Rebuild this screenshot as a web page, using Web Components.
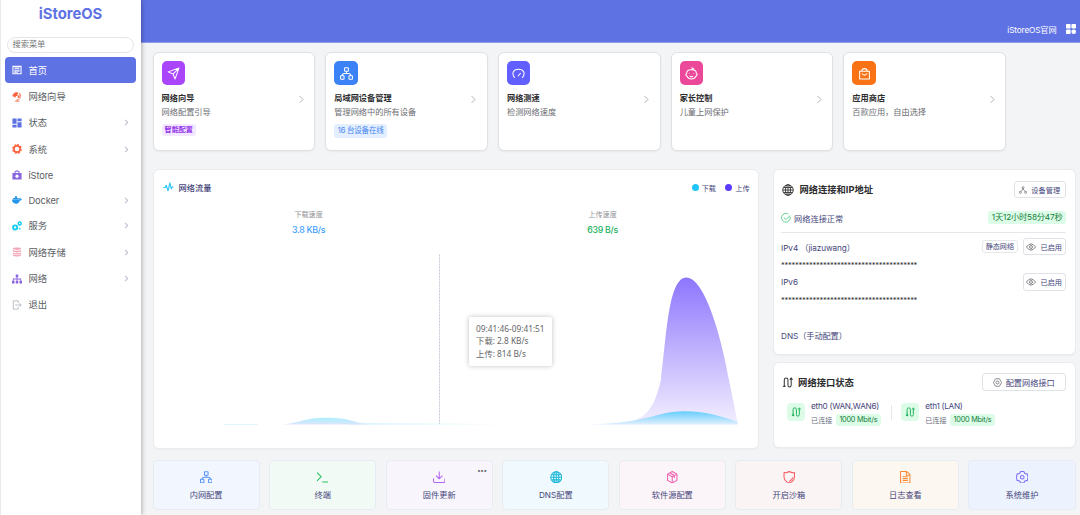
<!DOCTYPE html>
<html lang="zh-CN">
<head>
<meta charset="utf-8">
<title>iStoreOS</title>
<style>
  html, body {
    margin: 0;
    height: 100%;
    overflow: hidden;
  }

  body {
    --accent: #5e72e4;
    --ink: #45457a;
    --line: #e5e7eb;
    --page: #f3f4f6;
    font-family: Inter, "Noto Sans CJK SC", sans-serif;
    font-size: 8.2px;
    color: var(--ink);
    background: var(--page);
  }
</style>
</head>
<body>
<router-app></router-app>

<script>
// Icons on a 24x24 grid, stroked with currentColor unless they set a fill.
const ICONS = {
  home: '<path fill="currentColor" stroke="none" fill-rule="evenodd" d="M1 2h22v20H1zM3.500 4.500v15h17v-15zM6 6h12v3H6zM6 11h3v8H6zM10.500 11h3v8h-3zM15 11h3v5h-3z"/>',
  guide: '<g fill="currentColor" stroke="none"><path d="M3 5c3-5 10-5 13-3l-3 4 1 3-5 1-1 4-4-3-3-1c0-2 1-4 2-5zM17 6c2 3 2 6 0 9l-4-2 1-3z"/><path d="M18 2c7 6 4 16-4 17v2h4v2H7v-2h4v-3c9 1 13-8 6-14z"/></g>',
  status: '<path fill="currentColor" stroke="none" d="M1 1h10v13H1zM1 16h10v7H1zM13 1h10v7H13zM13 10h10v13H13z"/>',
  gear: '<circle cx="12" cy="12" r="7.500" stroke-width="4"/><path stroke-width="3" stroke-dasharray="4.500 3.600" d="M12 1.700a10.300 10.300 0 1 1 0 20.600a10.300 10.300 0 1 1 0-20.600"/>',
  store: '<path fill="currentColor" stroke="none" fill-rule="evenodd" d="M1 7h5V5q0-4 4-4h4q4 0 4 4v2h5v16H1zM8.500 7h7V4h-7zM12 10l-5 5 5 5 5-5z"/>',
  docker: '<path fill="currentColor" stroke="none" d="M0 11h18c-1-2 0-4 1-5 2 1 2 2 2 4 1-1 2 0 3 0-1 2-3 3-5 3-2 6-5 8-10 8-5 0-9-4-9-10zM3 7h13v3H3zM7 3h5v4H7z"/>',
  gears: '<circle cx="7.500" cy="15.500" r="5" stroke-width="4.500"/><circle cx="18.500" cy="6" r="3.500" stroke-width="3.500"/><circle cx="18.500" cy="18.500" r="1.500"/>',
  disk: '<g fill="currentColor" stroke="none"><path d="M2 4q0-3 10-3t10 3v1q-10 4-20 0z"/><path d="M2 7q10 4 20 0v4q-10 4-20 0z"/><path d="M2 13q10 4 20 0v3q-10 4-20 0z"/><path d="M2 18q10 4 20 0v2q-2 3-10 3t-10-3z"/></g>',
  sitemap: '<path fill="currentColor" stroke="none" d="M9 1h6v7h-2v3h9v5h2v7h-6v-7h2v-3h-7v3h2v7H9v-7h2v-3H4v3h2v7H0v-7h2v-5h9V8H9z"/>',
  exit: '<path d="M15 7V2H3v20h12v-5M8 12h14M18 8l4 4-4 4"/>',
  right: '<path d="M7 3l9 9-9 9"/>',
  grid: '<g fill="currentColor" stroke="none"><rect x="0" y="0" width="11" height="11" rx="2"/><rect x="13" y="0" width="11" height="11" rx="2"/><rect x="0" y="13" width="11" height="11" rx="2"/><rect x="13" y="13" width="11" height="11" rx="5"/></g>',
  plane: '<path d="M22 2L2 9l9 4 4 9zM11 13L22 2"/>',
  nodes: '<rect x="8.500" y="1.500" width="7" height="6.500" rx="1"/><rect x="1" y="16" width="6.500" height="6.500" rx="1"/><rect x="16.500" y="16" width="6.500" height="6.500" rx="1"/><path d="M12 8v4M4 16q0-4 4-4h8q4 0 4 4"/>',
  gauge: '<path d="M5 20C-2 11 3 4 12 4s14 7 7 16M11 17l5-6"/>',
  baby: '<path d="M13 5c6 0 8 3 8 7 2 1 2 3 0 4-2 4-5 6-9 6s-7-2-9-6c-2-1-2-3 0-4 0-4 3-7 8-7 3 0 4-3 1-4M13 5q4 0 3-3M9 17q3 2 6 0M8 12v1M16 12v1"/>',
  bag: '<path d="M3 8h18v14H3zM7 8q0-5 5-5t5 5M7 12q5 6 10 0"/>',
  pulse: '<path d="M1 12h4l2-5 4 12 4-17 3 13 2-4h3"/>',
  globe: '<circle cx="12" cy="12" r="10.500"/><ellipse cx="12" cy="12" rx="5" ry="10.500"/><path d="M12 1.500v21M1.500 12h21M3.500 7h17M3.500 17h17"/>',
  user: '<circle cx="12" cy="5" r="3"/><path d="M12 8l-6 9M12 8l6 9"/><circle cx="4" cy="19" r="3"/><circle cx="20" cy="19" r="3"/>',
  check: '<path d="M22 9a10.500 10.500 0 1 1-4-6M7 11l5 5L22 6"/>',
  eye: '<path d="M1 12q11-15 22 0q-11 15-22 0z"/><circle cx="12" cy="12" r="3.500"/>',
  port: '<path d="M5 21V6q0-4 4-4t4 4v12q0 4 3.500 4T20 18V4M2 20h6M5 16v6M17 6l3-4 3 4"/>',
  hex: '<path d="M7 2h10l6 10-6 10H7L1 12z"/><circle cx="12" cy="12" r="4"/>',
  terminal: '<path d="M2 3l8 8-8 8M12 21h11"/>',
  download: '<path d="M12 1v14M6 9l6 6 6-6M1 14v5q0 3 3 3h16q3 0 3-3v-5"/>',
  box: '<path d="M12 1l9 5v12l-9 5-9-5V6zM3 6l9 5 9-5M12 11v12M7 3.500l9 5v5"/>',
  shield: '<path d="M12 1q5 3 10 2v9q-1 8-10 11Q3 20 2 12V3q5 1 10-2zM19 12q-1 5-7 8"/>',
  file: '<path d="M3 1h12l6 6v16H3zM14 1v7h7M7 11h10M7 14.500h10M7 18h10"/>',
  cog: '<path d="M9 1h6l2 4 5 1 1 6-1 6-5 1-2 4H9l-2-4-5-1-1-6 1-6 5-1z"/><circle cx="12" cy="12" r="3.500"/>',
};

class UiIcon extends HTMLElement {
  connectedCallback() {
    const size = this.getAttribute('size') || 12;
    const weight = this.getAttribute('weight') || 2;
    this.attachShadow({ mode: 'open' }).innerHTML = `
      <style>
        :host { display: block; flex: none; width: ${size}px; height: ${size}px; }
        svg { display: block; width: 100%; height: 100%; }
      </style>
      <svg viewBox="0 0 24 24" fill="none" stroke="currentColor" stroke-width="${weight}"
        stroke-linejoin="round">${ICONS[this.getAttribute('name')]}</svg>`;
  }
}

class NavItem extends HTMLElement {
  connectedCallback() {
    const more = this.hasAttribute('more')
      ? '<ui-icon class="more" name="right" size="7" weight="4.500"></ui-icon>' : '';
    this.attachShadow({ mode: 'open' }).innerHTML = `
      <style>
        :host {
          display: flex;
          align-items: center;
          box-sizing: border-box;
          height: 26.4px;
          padding: 0 6px 0 7px;
          border-radius: 4px;
          font-size: 9.3px;
          line-height: 14px;
          color: #5b5e63;
        }
        :host([latin]) { height: 25px; letter-spacing: -.15px; }
        :host([active]) { background: var(--accent); color: #fff; }
        :host([active]) .icon { color: #fff; }
        .icon { color: ${this.getAttribute('color')}; margin-right: 6.500px; }
        .label { flex: 1; padding-top: 1px; }
        .more { color: #c3c8d2; }
      </style>
      <ui-icon class="icon" name="${this.getAttribute('icon')}" size="10"></ui-icon>
      <span class="label"><slot></slot></span>${more}`;
  }
}

class SideNav extends HTMLElement {
  connectedCallback() {
    this.attachShadow({ mode: 'open' }).innerHTML = `
      <style>
        :host {
          display: block;
          box-sizing: border-box;
          width: 140.500px;
          padding: 0 4.500px 0 4px;
          border-left: 1px solid #e9eaec;
          background: #fff;
          box-shadow: 0 0 5px rgba(0, 0, 0, .4);
          z-index: 1;
        }
        .logo {
          height: 37px;
          font-size: 14.8px;
          font-weight: 700;
          line-height: 28px;
          text-align: center;
          color: var(--accent);
        }
        .search {
          box-sizing: border-box;
          height: 15.500px;
          margin: 0 2px 4.500px;
          padding-left: 4.500px;
          border: 1px solid #e3e5e9;
          border-radius: 8px;
          line-height: 13px;
          color: #75777b;
        }
      </style>
      <div class="logo">iStoreOS</div>
      <div class="search">搜索菜单</div>
      <nav>
        <nav-item icon="home" active>首页</nav-item>
        <nav-item icon="guide" color="#fb6340">网络向导</nav-item>
        <nav-item icon="status" color="#5e72e4" more>状态</nav-item>
        <nav-item icon="gear" color="#fb6340" more>系统</nav-item>
        <nav-item icon="store" color="#8965e0" latin>iStore</nav-item>
        <nav-item icon="docker" color="#2496ed" latin more>Docker</nav-item>
        <nav-item icon="gears" color="#11cdef" more>服务</nav-item>
        <nav-item icon="disk" color="#f3a4b5" more>网络存储</nav-item>
        <nav-item icon="sitemap" color="#8965e0" more>网络</nav-item>
        <nav-item icon="exit" color="#adb5bd">退出</nav-item>
      </nav>`;
  }
}

class TopBar extends HTMLElement {
  connectedCallback() {
    this.attachShadow({ mode: 'open' }).innerHTML = `
      <style>
        :host {
          display: flex;
          justify-content: flex-end;
          align-items: flex-start;
          gap: 9px;
          box-sizing: border-box;
          height: 43px;
          padding: 23.500px 4.500px 0 0;
          border-bottom: 1px solid #8e9cec;
          background: var(--accent);
          color: #fff;
        }
        span { line-height: 13px; letter-spacing: -.12px; }
      </style>
      <span>iStoreOS官网</span><ui-icon name="grid" size="10"></ui-icon>`;
  }
}

class FeatureCard extends HTMLElement {
  connectedCallback() {
    this.attachShadow({ mode: 'open' }).innerHTML = `
      <style>
        :host {
          display: flex;
          flex-direction: column;
          align-items: flex-start;
          box-sizing: border-box;
          height: 98.500px;
          padding: 8px;
          border: 1px solid #dfe1e5;
          border-radius: 6px;
          background: #fff;
          box-shadow: 0 1px 2px rgba(0, 0, 0, .05);
        }
        .badge {
          display: grid;
          place-items: center;
          width: 23.500px;
          height: 23.500px;
          border-radius: 5px;
          background: ${this.getAttribute('color')};
          color: #fff;
        }
        .body {
          display: flex;
          align-items: center;
          justify-content: space-between;
          align-self: stretch;
          margin-top: 6px;
        }
        .title { font-weight: 700; line-height: 14px; color: #2c2c2e; }
        .desc { line-height: 14px; color: #6b6d72; }
        .body ui-icon { margin: -10px .500px 0 0; color: #a9acb3; }
      </style>
      <div class="badge"><ui-icon name="${this.getAttribute('icon')}" size="13" weight="1.900"></ui-icon></div>
      <div class="body">
        <div>
          <div class="title">${this.getAttribute('heading')}</div>
          <div class="desc">${this.getAttribute('desc')}</div>
        </div>
        <ui-icon name="right" size="9" weight="2.500"></ui-icon>
      </div>
      <slot></slot>`;
  }
}

class UiTag extends HTMLElement {
  connectedCallback() {
    this.attachShadow({ mode: 'open' }).innerHTML = `
      <style>
        :host {
          display: block;
          flex: none;
          box-sizing: border-box;
          padding: 0 3.500px;
          border-radius: 3px;
          font-size: 7.300px;
          letter-spacing: -.24px;
          line-height: 12px;
          white-space: nowrap;
          background: #dcfce7;
          color: #15803d;
        }
        :host([tone="purple"]) {
          margin-top: 5px;
          padding: 0 3px;
          font-size: 7.100px;
          font-weight: 700;
          letter-spacing: 0;
          background: #f3e8ff;
          color: #9333ea;
        }
        :host([tone="blue"]) {
          margin-top: 5px;
          font-size: 7.500px;
          line-height: 14px;
          letter-spacing: -.2px;
          background: #e3eeff;
          color: #4484f2;
        }
        :host([tone="plain"]) {
          padding: 0 2.500px;
          border: 1px solid var(--line);
          font-size: 7.100px;
          line-height: 11px;
          letter-spacing: 0;
          background: #fff;
          color: var(--ink);
        }
        :host([large]) { font-size: 8.2px; line-height: 13px; letter-spacing: -.15px; }
      </style>
      <slot></slot>`;
  }
}

class UiButton extends HTMLElement {
  connectedCallback() {
    this.attachShadow({ mode: 'open' }).innerHTML = `
      <style>
        :host {
          display: flex;
          flex: none;
          align-items: center;
          justify-content: center;
          gap: 4px;
          box-sizing: border-box;
          width: ${this.getAttribute('width')}px;
          height: 17.500px;
          border: 1px solid #e0e2e7;
          border-radius: 3px;
          font-size: 7.200px;
          background: #fff;
          white-space: nowrap;
        }
        ui-icon { color: #55565c; }
      </style>
      <ui-icon name="${this.getAttribute('icon')}" size="${this.getAttribute('icon-size') || 9}" weight="1.800"></ui-icon>
      <slot></slot>`;
  }
}

class UiPanel extends HTMLElement {
  connectedCallback() {
    this.attachShadow({ mode: 'open' }).innerHTML = `
      <style>
        :host {
          display: block;
          box-sizing: border-box;
          border: 1px solid #e9ebee;
          border-radius: 6px;
          background: #fff;
          box-shadow: 0 1px 1px rgba(0, 0, 0, .03);
        }
      </style>
      <slot></slot>`;
  }
}

class TrafficChart extends HTMLElement {
  connectedCallback() {
    this.attachShadow({ mode: 'open' }).innerHTML = `
      <style>
        :host { display: flex; flex-direction: column; position: relative; height: 278px; }
        header {
          display: flex;
          align-items: center;
          height: 36px;
          padding: 0 8px 0 9.500px;
        }
        h2 { flex: 1; margin: -1.500px 0 0 4.500px; font-size: 8.2px; font-weight: 500; }
        .key { display: flex; align-items: center; gap: 3px; margin-left: 9.500px; font-size: 7.100px; }
        .key::before { content: ""; width: 7px; height: 7px; border-radius: 50%; background: var(--dot); }
        .rates {
          display: grid;
          grid-template-columns: 1fr 1fr;
          padding: 1px 8px 0;
          text-align: center;
          line-height: 15px;
        }
        small { display: block; font-size: 7.100px; color: #929398; }
        b { display: block; font-size: 8.800px; font-weight: 500; letter-spacing: -.3px; color: #409eff; }
        .up b { color: #22b35e; }
        svg { display: block; width: 605px; height: 185px; margin: 13.500px 0 0 -.500px; }
        .tip {
          position: absolute;
          left: 315.500px;
          top: 147.300px;
          padding: 6px 7px;
          border-radius: 2px;
          background: #fff;
          box-shadow: 0 0 5px rgba(0, 0, 0, .25);
          font: 8.3px/12.3px "Noto Sans", "Noto Sans CJK SC", sans-serif;
          color: #666;
          white-space: nowrap;
        }
      </style>
      <header>
        <ui-icon name="pulse" size="11" weight="2.400" style="color:#28c3f7"></ui-icon>
        <h2>网络流量</h2>
        <span class="key" style="--dot:#22c5f7">下载</span>
        <span class="key" style="--dot:#5b3bfb">上传</span>
      </header>
      <div class="rates">
        <div><small>下载速度</small><b>3.8 KB/s</b></div>
        <div class="up"><small>上传速度</small><b>639 B/s</b></div>
      </div>
      <svg viewBox="153 250 605 185">
        <defs>
          <linearGradient id="up" x2="0" y2="1">
            <stop offset="0" stop-color="#8e76fd"/>
            <stop offset="1" stop-color="#f3effe"/>
          </linearGradient>
          <linearGradient id="down" x2="0" y2="1">
            <stop offset="0" stop-color="#66cdfd"/>
            <stop offset="1" stop-color="#e0effd"/>
          </linearGradient>
          <linearGradient id="early" x2="0" y2="1">
            <stop offset="0" stop-color="#aaf0fc"/>
            <stop offset="1" stop-color="#dce5fc"/>
          </linearGradient>
          <linearGradient id="tail">
            <stop offset="0" stop-color="#d5f3fd"/>
            <stop offset="1" stop-color="#fff"/>
          </linearGradient>
        </defs>
        <path fill="none" stroke="#e2f4fd" d="M224 424.500H258"/>
        <path fill="url(#tail)" d="M350 423q60 0 170 1v.800H350z"/>
        <path fill="url(#early)" d="M282 424.500C300 423 304 417.700 327 417.700S352 422 368 424.500z"/>
        <path fill="url(#up)" d="M600 424.500C642 424 652 417 661 380C667 330 669 277.500 686.500 277.500C704 277.500 721 334 729 380L737.500 422v2.500z"/>
        <path fill="url(#down)" d="M588 424.500C650 423 656 411.300 685 411.300C703 411.300 722 416 737.500 422v2.500z"/>
        <path fill="none" stroke="#c2c3d0" stroke-width=".9" stroke-dasharray="2 1" d="M439.500 254.500V424"/>
      </svg>
      <div class="tip">09:41:46-09:41:51<br>下载: 2.8 KB/s<br>上传: 814 B/s</div>`;
  }
}

class AddressPanel extends HTMLElement {
  connectedCallback() {
    const mask = '*'.repeat(39);
    this.attachShadow({ mode: 'open' }).innerHTML = `
      <style>
        :host { display: block; box-sizing: border-box; height: 184.800px; padding: 11px 8.500px 0 7.500px; }
        .row { display: flex; align-items: center; height: 18px; }
        .row span { flex: 1; letter-spacing: -.08px; }
        h2 { flex: 1; margin: -1.500px 0 0 5.500px; font-size: 9.25px; font-weight: 700; color: #2c2c2e; }
        .state { margin-top: 10px; padding-bottom: 5px; border-bottom: 1px solid var(--line); }
        .row.state span { padding-left: 3px; letter-spacing: 0; }
        .mask { height: 17.500px; font-size: 7.500px; line-height: 20px; color: #333; letter-spacing: -.27px; }
        .first { margin-top: 5px; }
        ui-tag { margin-right: 5px; }
        .state ui-tag { margin-right: 0; }
      </style>
      <div class="row">
        <ui-icon name="globe" size="12" weight="1.800" style="color:#333;margin-left:1px"></ui-icon>
        <h2>网络连接和IP地址</h2>
        <ui-button icon="user" icon-size="8" width="52.500">设备管理</ui-button>
      </div>
      <div class="row state">
        <ui-icon name="check" size="10" weight="1.800" style="color:#2fc46b"></ui-icon>
        <span>网络连接正常</span>
        <ui-tag large>1天12小时58分47秒</ui-tag>
      </div>
      <div class="row first">
        <span>IPv4 （jiazuwang）</span>
        <ui-tag tone="plain">静态网络</ui-tag>
        <ui-button icon="eye" icon-size="10" width="43.500">已启用</ui-button>
      </div>
      <div class="mask">${mask}</div>
      <div class="row">
        <span>IPv6</span>
        <ui-button icon="eye" icon-size="10" width="43.500">已启用</ui-button>
      </div>
      <div class="mask">${mask}</div>
      <div class="row" style="margin-top:17px"><span>DNS（手动配置）</span></div>`;
  }
}

class PortItem extends HTMLElement {
  connectedCallback() {
    this.attachShadow({ mode: 'open' }).innerHTML = `
      <style>
        :host { display: flex; align-items: center; gap: 6px; }
        .chip {
          display: grid;
          place-items: center;
          width: 18px;
          height: 18px;
          border-radius: 4px;
          background: #dcfce7;
          color: #22b35e;
        }
        .name { line-height: 15px; letter-spacing: -.28px; white-space: nowrap; }
        .link { display: flex; align-items: center; gap: 3.500px; font-size: 7.100px; color: #6b7080; }
      </style>
      <div class="chip"><ui-icon name="port" size="10" weight="2.400"></ui-icon></div>
      <div>
        <div class="name"><slot></slot></div>
        <div class="link">已连接<ui-tag>1000 Mbit/s</ui-tag></div>
      </div>`;
  }
}

class PortPanel extends HTMLElement {
  connectedCallback() {
    this.attachShadow({ mode: 'open' }).innerHTML = `
      <style>
        :host { display: block; box-sizing: border-box; height: 84px; padding: 10.500px 8.500px 0; }
        header { display: flex; align-items: center; }
        h2 { flex: 1; margin: 0 0 0 5px; font-size: 9.3px; font-weight: 700; color: #2c2c2e; }
        .ports { display: flex; align-items: center; margin: 8px 0 0 5px; }
        i { width: 1px; height: 15px; margin: 0 9px 0 10.500px; background: var(--line); }
      </style>
      <header>
        <ui-icon name="port" size="11" weight="2.200" style="color:#333"></ui-icon>
        <h2>网络接口状态</h2>
        <ui-button icon="hex" width="84.500" style="font-size:8.2px">配置网络接口</ui-button>
      </header>
      <div class="ports">
        <port-item>eth0 (WAN,WAN6)</port-item><i></i><port-item>eth1 (LAN)</port-item>
      </div>`;
  }
}

class QuickTile extends HTMLElement {
  connectedCallback() {
    const dots = this.hasAttribute('menu') ? '<div class="dots">•••</div>' : '';
    this.attachShadow({ mode: 'open' }).innerHTML = `
      <style>
        :host {
          display: flex;
          flex-direction: column;
          align-items: center;
          position: relative;
          box-sizing: border-box;
          height: 50.500px;
          padding-top: 10px;
          border: 1px solid #e8ebf2;
          border-radius: 4px;
          background: ${this.getAttribute('tint')};
        }
        ui-icon { color: ${this.getAttribute('color')}; }
        span { margin-top: 4.500px; line-height: 14px; }
        .dots { position: absolute; right: 5px; top: 4px; font-size: 6.200px; line-height: 11px; letter-spacing: -.3px; color: #666; }
      </style>
      <ui-icon name="${this.getAttribute('icon')}" size="12.500"></ui-icon>
      <span><slot></slot></span>${dots}`;
  }
}

class RouterApp extends HTMLElement {
  connectedCallback() {
    this.attachShadow({ mode: 'open' }).innerHTML = `
      <style>
        :host { display: flex; width: 1080px; height: 515px; }
        .content { flex: 1; min-width: 0; }
        main { padding: 9.400px 4.500px 0 12.100px; }
        .features { display: grid; grid-template-columns: repeat(5, 162.700px); gap: 10px; }
        .middle { display: flex; gap: 14px; margin-top: 17.800px; }
        .middle > ui-panel { width: 606px; }
        .side { flex: 1; display: flex; flex-direction: column; gap: 6.500px; }
        .tiles { display: grid; grid-template-columns: repeat(8, 1fr); gap: 9.500px; margin-top: 11px; }
      </style>
      <side-nav></side-nav>
      <div class="content">
        <top-bar></top-bar>
        <main>
          <section class="features">
            <feature-card icon="plane" color="#a946fb" heading="网络向导" desc="网络配置引导"><ui-tag tone="purple">智能配置</ui-tag></feature-card>
            <feature-card icon="nodes" color="#3b82f6" heading="局域网设备管理" desc="管理网络中的所有设备"><ui-tag tone="blue">16 台设备在线</ui-tag></feature-card>
            <feature-card icon="gauge" color="#615fff" heading="网络测速" desc="检测网络速度"></feature-card>
            <feature-card icon="baby" color="#ec4899" heading="家长控制" desc="儿童上网保护"></feature-card>
            <feature-card icon="bag" color="#f97316" heading="应用商店" desc="百款应用，自由选择"></feature-card>
          </section>
          <section class="middle">
            <ui-panel><traffic-chart></traffic-chart></ui-panel>
            <div class="side">
              <ui-panel><address-panel></address-panel></ui-panel>
              <ui-panel><port-panel></port-panel></ui-panel>
            </div>
          </section>
          <section class="tiles">
            <quick-tile icon="nodes" color="#5b95f8" tint="#f2f6fe">内网配置</quick-tile>
            <quick-tile icon="terminal" color="#22c55e" tint="#f2faf6">终端</quick-tile>
            <quick-tile icon="download" color="#b565f5" tint="#f8f5fd" menu>固件更新</quick-tile>
            <quick-tile icon="globe" color="#19b8d8" tint="#f0f9fd">DNS配置</quick-tile>
            <quick-tile icon="box" color="#f05fb0" tint="#fbf4f9">软件源配置</quick-tile>
            <quick-tile icon="shield" color="#f45b62" tint="#fbf4f4">开启沙箱</quick-tile>
            <quick-tile icon="file" color="#fb8a35" tint="#fdf7f2">日志查看</quick-tile>
            <quick-tile icon="cog" color="#806cf8" tint="#edf3fe">系统维护</quick-tile>
          </section>
        </main>
      </div>`;
  }
}

customElements.define('ui-icon', UiIcon);
customElements.define('ui-tag', UiTag);
customElements.define('ui-button', UiButton);
customElements.define('ui-panel', UiPanel);
customElements.define('nav-item', NavItem);
customElements.define('side-nav', SideNav);
customElements.define('top-bar', TopBar);
customElements.define('feature-card', FeatureCard);
customElements.define('traffic-chart', TrafficChart);
customElements.define('address-panel', AddressPanel);
customElements.define('port-item', PortItem);
customElements.define('port-panel', PortPanel);
customElements.define('quick-tile', QuickTile);
customElements.define('router-app', RouterApp);
</script>
</body>
</html>
